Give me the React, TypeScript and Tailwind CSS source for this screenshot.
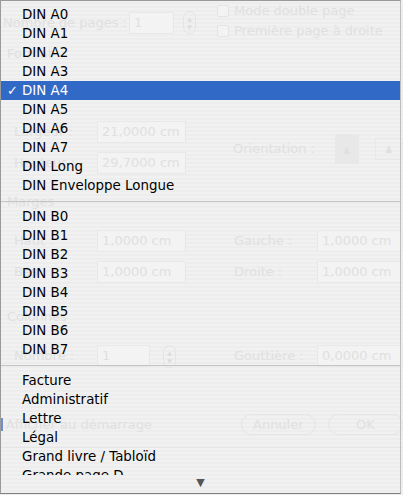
import { Fragment } from 'react';

type Item = { label: string; checked?: boolean } | 'sep';

const items: Item[] = [
  { label: 'DIN A0' },
  { label: 'DIN A1' },
  { label: 'DIN A2' },
  { label: 'DIN A3' },
  { label: 'DIN A4', checked: true },
  { label: 'DIN A5' },
  { label: 'DIN A6' },
  { label: 'DIN A7' },
  { label: 'DIN Long' },
  { label: 'DIN Enveloppe Longue' },
  'sep',
  { label: 'DIN B0' },
  { label: 'DIN B1' },
  { label: 'DIN B2' },
  { label: 'DIN B3' },
  { label: 'DIN B4' },
  { label: 'DIN B5' },
  { label: 'DIN B6' },
  { label: 'DIN B7' },
  'sep',
  { label: 'Facture' },
  { label: 'Administratif' },
  { label: 'Lettre' },
  { label: 'Légal' },
  { label: 'Grand livre / Tabloïd' },
  { label: 'Grande page D' },
  { label: 'Grande page E' },
];

function Field({ value, w }: { value: string; w: string }) {
  return (
    <div className={`${w} h-[22px] border border-[#e8e8e8] bg-[#f3f3f3] flex items-center px-[4px] text-[#e0e0e0]`}>
      {value}
    </div>
  );
}

function Stepper() {
  return (
    <div className="w-[13px] h-[23px] rounded-full border border-[#e4e4e4] flex flex-col items-center justify-center text-[6px] leading-[8px] text-[#dcdcdc]">
      <span>▲</span>
      <span>▼</span>
    </div>
  );
}

function Check() {
  return <div className="w-[12px] h-[12px] border border-[#e4e4e4] bg-[#f3f3f3] rounded-[2px]" />;
}

// the faded dialog that sits behind the open popup menu
function Dialog() {
  return (
    <div className="w-[403px] h-[495px] flex flex-col text-[13px] text-[#e0e0e0] bg-[linear-gradient(180deg,#f1f1f1_50%,#ededed_50%)] bg-[length:100%_4px]">
      <div className="h-[44px] flex shrink-0">
        <div className="w-[217px] flex items-center pl-[3px] pt-[1px]">
          <span className="w-[126px]">Nombre de pages :</span>
          <Field value="1" w="w-[45px]" />
          <div className="ml-[9px]"><Stepper /></div>
        </div>
        <div className="flex flex-col pt-[4px] gap-[6px]">
          <div className="flex items-center gap-[5px] h-[14px]"><Check /><span>Mode double page</span></div>
          <div className="flex items-center gap-[5px] h-[14px]"><Check /><span>Première page à droite</span></div>
        </div>
      </div>
      <div className="h-[20px] pl-[7px] flex items-center shrink-0">Format</div>
      <div className="h-[128px] flex shrink-0">
        <div className="w-[234px] flex flex-col pt-[57px] pl-[14px] gap-[9px]">
          <div className="flex items-center"><span className="w-[83px]">Largeur :</span><Field value="21,0000 cm" w="w-[89px]" /></div>
          <div className="flex items-center"><span className="w-[83px]">Hauteur :</span><Field value="29,7000 cm" w="w-[89px]" /></div>
        </div>
        <div className="flex items-center pt-[42px] flex-1">
          <span className="w-[102px]">Orientation :</span>
          <div className="w-[24px] h-[30px] bg-[#e8e8e8] flex items-end justify-center pb-[6px] text-[10px]">♟</div>
          <div className="ml-[16px] w-[28px] h-[22px] border border-[#e8e8e8] flex items-center justify-center text-[10px]">♟</div>
        </div>
      </div>
      <div className="h-[20px] pl-[7px] flex items-center shrink-0">Marges</div>
      <div className="h-[95px] flex shrink-0">
        <div className="w-[234px] flex flex-col pt-[18px] pl-[14px] gap-[9px]">
          <div className="flex items-center"><span className="w-[83px]">Haut :</span><Field value="1,0000 cm" w="w-[89px]" /></div>
          <div className="flex items-center"><span className="w-[83px]">Bas :</span><Field value="1,0000 cm" w="w-[89px]" /></div>
        </div>
        <div className="flex flex-col pt-[18px] gap-[9px] flex-1">
          <div className="flex items-center"><span className="w-[83px]">Gauche :</span><Field value="1,0000 cm" w="flex-1" /></div>
          <div className="flex items-center"><span className="w-[83px]">Droite :</span><Field value="1,0000 cm" w="flex-1" /></div>
        </div>
      </div>
      <div className="h-[20px] pl-[7px] flex items-center shrink-0">Colonnes</div>
      <div className="h-[75px] flex shrink-0">
        <div className="w-[234px] flex items-start pt-[18px] pl-[14px]">
          <span className="w-[83px] leading-[22px]">Nombre :</span>
          <Field value="1" w="w-[53px]" />
          <div className="ml-[13px]"><Stepper /></div>
        </div>
        <div className="flex items-start pt-[18px] flex-1">
          <span className="w-[83px] leading-[22px]">Gouttière :</span>
          <Field value="0,0000 cm" w="flex-1" />
        </div>
      </div>
      <div className="h-[45px] flex items-center shrink-0">
        <div className="w-[3px] h-[13px] bg-[#6d8fd0]" />
        <span className="ml-[3px] w-[257px]">Afficher au démarrage</span>
        <div className="w-[82px] h-[21px] rounded-full border border-[#e4e4e4] flex items-center justify-center">Annuler</div>
        <div className="ml-[12px] w-[82px] h-[21px] rounded-full border border-[#e4e4e4] flex items-center justify-center">OK</div>
      </div>
      <div className="flex-1 border-t border-[#e6e6e6]" />
    </div>
  );
}

function Menu() {
  return (
    <div
      className="absolute left-0 top-0 w-[401px] h-[494px] border border-[#9a9a9a] border-r-[#bdbdbd] border-b-[#808080] flex flex-col text-black"
      style={{ fontFamily: '"DejaVu Sans", "Lucida Grande", sans-serif' }}
    >
      <div className="h-[474px] overflow-hidden pt-[4px]">
        {items.map((it, i) =>
          it === 'sep' ? (
            <div key={i} className="h-[12px] flex items-center">
              <div className="w-full h-px bg-[#c4c4c4]" />
            </div>
          ) : (
            <Fragment key={i}>
              <div
                className={`h-[19px] flex items-center text-[13.4px] leading-none ${
                  it.checked ? 'bg-[#3169c6] text-white' : ''
                }`}
              >
                <span className="w-[21px] pl-[6px] text-[13px]">{it.checked ? '✓' : ''}</span>
                <span>{it.label}</span>
              </div>
            </Fragment>
          ),
        )}
      </div>
      <div className="flex-1 flex items-center justify-center text-[11px] text-[#555] pb-[1px]">▼</div>
    </div>
  );
}

export default function App() {
  return (
    <div className="relative w-[403px] h-[495px] overflow-hidden bg-[#efefef]" style={{ fontFamily: '"DejaVu Sans", sans-serif' }}>
      <Dialog />
      <Menu />
    </div>
  );
}
